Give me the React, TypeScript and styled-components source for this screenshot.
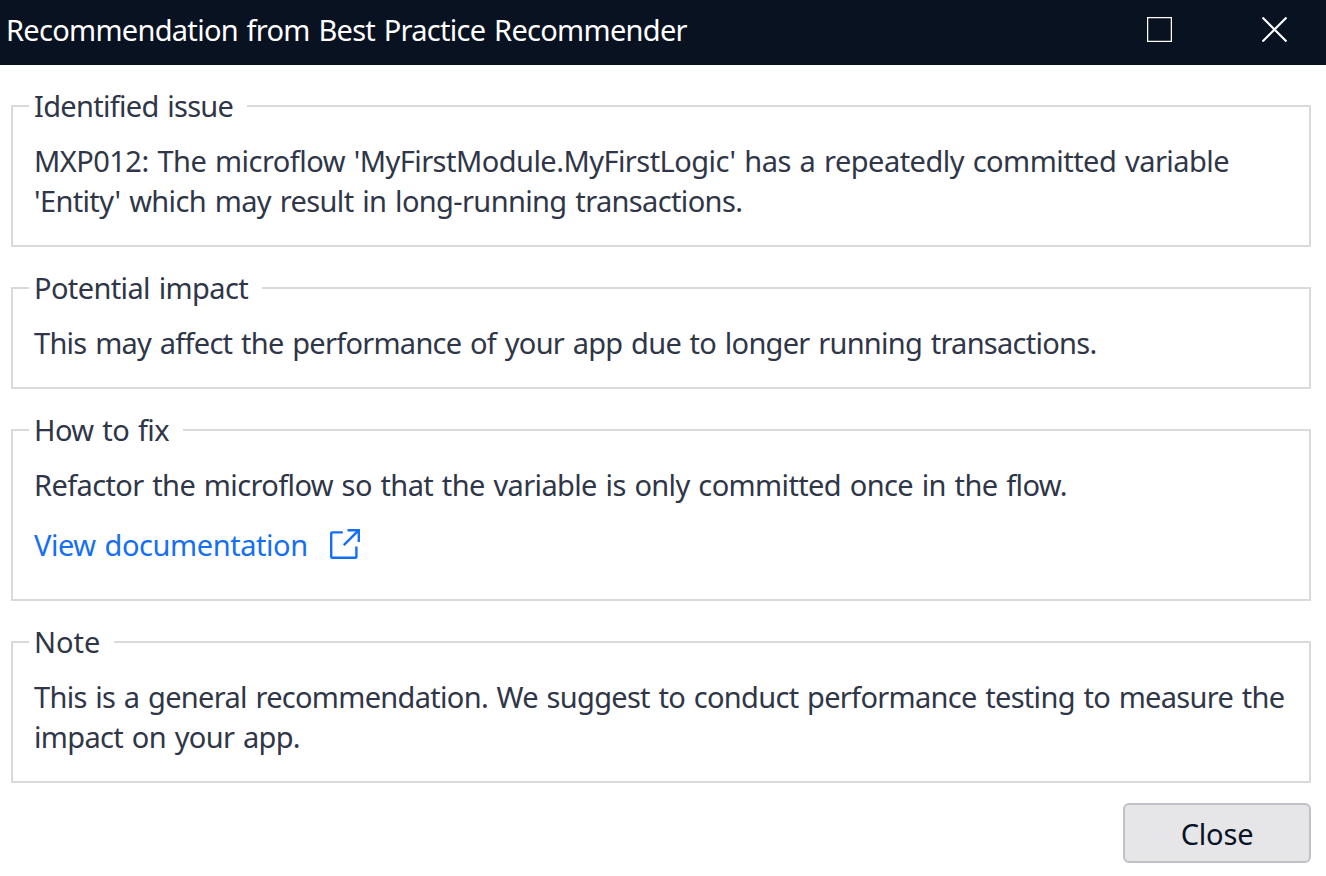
import React from "react";
import styled, { createGlobalStyle } from "styled-components";

const GlobalStyle = createGlobalStyle`
  * { box-sizing: border-box; }
  body { margin: 0; background: #fff; }
`;

const Dialog = styled.div`
  width: 1326px;
  height: 876px;
  display: flex;
  flex-direction: column;
  overflow: hidden;
  background: #fff;
  color: #2f3648;
  font-family: "Noto Sans", "Open Sans", sans-serif;
  font-size: 29px;
  line-height: 40px;
`;

const TitleBar = styled.header`
  flex: none;
  height: 65px;
  display: flex;
  align-items: center;
  justify-content: space-between;
  padding: 0 39px 6px 6px;
  background: #091221;
  color: #fff;
`;

const Title = styled.h1`
  margin: 0;
  font: inherit;
  white-space: nowrap;
`;

const WindowControls = styled.div`
  display: flex;
  gap: 90px;
`;

const ControlButton = styled.button`
  display: flex;
  padding: 0;
  border: 0;
  background: none;
  color: inherit;
`;

const Content = styled.main`
  display: flex;
  flex-direction: column;
  gap: 21px;
  padding: 21px 15px 0 11px;
`;

const Panel = styled.fieldset`
  min-width: 0;
  margin: 0;
  padding: 15px 0 24px 16px;
  border: 2px solid #dadada;
`;

const Legend = styled.legend`
  height: 40px;
  padding: 0 14px 0 5px;
  white-space: nowrap;
`;

const Line = styled.div`
  padding-left: 5px;
  white-space: nowrap;
`;

const Tracked = styled.span<{ $spacing: number }>`
  letter-spacing: ${(p) => p.$spacing}px;
  word-spacing: 1.8px;
`;

const DocLink = styled.a`
  display: flex;
  align-items: center;
  gap: 22px;
  margin: 20px 0 10px;
  padding-left: 5px;
  color: #146ff4;
  text-decoration: none;
`;

const LinkIcon = styled.svg`
  margin-bottom: 2px;
`;

const Footer = styled.footer`
  display: flex;
  justify-content: flex-end;
  padding: 20px 15px 0 0;
`;

const CloseButton = styled.button`
  width: 188px;
  height: 60px;
  padding: 2px 0 0;
  border: 2px solid #c1c1c9;
  border-radius: 6px;
  background: #e6e6e9;
  color: #0a1325;
  font: inherit;
`;

type Text = { text: string; spacing: number };
const T = ({ text, spacing }: Text) => <Tracked $spacing={spacing}>{text}</Tracked>;

const sections: { legend: Text; lines: Text[]; link?: Text }[] = [
  {
    legend: { text: "Identified issue", spacing: -0.7 },
    lines: [
      { text: "MXP012: The microflow 'MyFirstModule.MyFirstLogic' has a repeatedly committed variable", spacing: -0.535 },
      { text: "'Entity' which may result in long-running transactions.", spacing: -0.63 },
    ],
  },
  {
    legend: { text: "Potential impact", spacing: -0.62 },
    lines: [{ text: "This may affect the performance of your app due to longer running transactions.", spacing: -0.725 }],
  },
  {
    legend: { text: "How to fix", spacing: -0.57 },
    lines: [{ text: "Refactor the microflow so that the variable is only committed once in the flow.", spacing: -0.625 }],
    link: { text: "View documentation", spacing: -0.44 },
  },
  {
    legend: { text: "Note", spacing: 0 },
    lines: [
      { text: "This is a general recommendation. We suggest to conduct performance testing to measure the", spacing: -0.7 },
      { text: "impact on your app.", spacing: -0.66 },
    ],
  },
];

const MaximizeIcon = () => (
  <svg width="25" height="25" viewBox="0 0 25 25" fill="none">
    <rect x="0.6" y="0.6" width="23.8" height="23.8" stroke="currentColor" strokeWidth="1.3" />
  </svg>
);

const CloseIcon = () => (
  <svg width="25" height="25" viewBox="0 0 25 25" fill="none">
    <path d="M0.5 0.5 24.5 24.5M24.5 0.5 0.5 24.5" stroke="currentColor" strokeWidth="2.2" />
  </svg>
);

const ExternalIcon = () => (
  <LinkIcon width="30" height="30" viewBox="0 0 30 30" fill="none" stroke="currentColor" strokeWidth="2.4">
    <path d="M12.8 3.4H2.2Q1.2 3.4 1.2 4.4V27.8Q1.2 28.8 2.2 28.8H25.4Q26.4 28.8 26.4 27.8V17.5" />
    <path d="M17.5 1.2H28.8V13M28.8 1.2 13.8 16.2" />
  </LinkIcon>
);

export default function App() {
  return (
    <Dialog>
      <GlobalStyle />
      <TitleBar>
        <Title><T text="Recommendation from Best Practice Recommender" spacing={-0.71} /></Title>
        <WindowControls>
          <ControlButton aria-label="Maximize"><MaximizeIcon /></ControlButton>
          <ControlButton aria-label="Close window"><CloseIcon /></ControlButton>
        </WindowControls>
      </TitleBar>
      <Content>
        {sections.map((s) => (
          <Panel key={s.legend.text}>
            <Legend><T {...s.legend} /></Legend>
            {s.lines.map((l) => <Line key={l.text}><T {...l} /></Line>)}
            {s.link && <DocLink><T {...s.link} /><ExternalIcon /></DocLink>}
          </Panel>
        ))}
      </Content>
      <Footer>
        <CloseButton><T text="Close" spacing={-0.2} /></CloseButton>
      </Footer>
    </Dialog>
  );
}
